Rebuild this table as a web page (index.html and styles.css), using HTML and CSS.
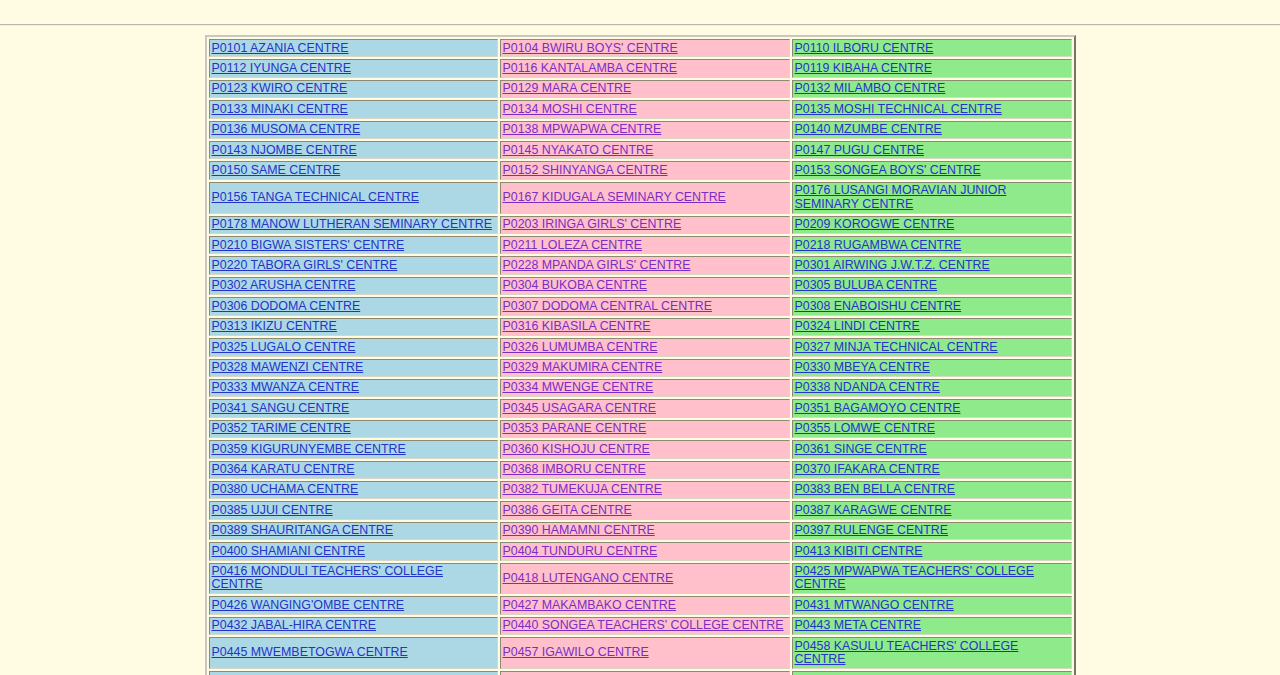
FILE: index.html
```html
<!DOCTYPE html>
<html>
<head>
<meta charset="utf-8">
<title>Centres</title>
<link rel="stylesheet" href="styles.css">
</head>
<body>
<hr class="rule">
<table class="centres">
<colgroup><col class="c1"><col class="c2"><col class="c3"></colgroup>
<tr><td class="blue"><a href="#">P0101 AZANIA CENTRE</a></td><td class="pink"><a href="#">P0104 BWIRU BOYS' CENTRE</a></td><td class="green"><a href="#">P0110 ILBORU CENTRE</a></td></tr>
<tr><td class="blue"><a href="#">P0112 IYUNGA CENTRE</a></td><td class="pink"><a href="#">P0116 KANTALAMBA CENTRE</a></td><td class="green"><a href="#">P0119 KIBAHA CENTRE</a></td></tr>
<tr><td class="blue"><a href="#">P0123 KWIRO CENTRE</a></td><td class="pink"><a href="#">P0129 MARA CENTRE</a></td><td class="green"><a href="#">P0132 MILAMBO CENTRE</a></td></tr>
<tr><td class="blue"><a href="#">P0133 MINAKI CENTRE</a></td><td class="pink"><a href="#">P0134 MOSHI CENTRE</a></td><td class="green"><a href="#">P0135 MOSHI TECHNICAL CENTRE</a></td></tr>
<tr><td class="blue"><a href="#">P0136 MUSOMA CENTRE</a></td><td class="pink"><a href="#">P0138 MPWAPWA CENTRE</a></td><td class="green"><a href="#">P0140 MZUMBE CENTRE</a></td></tr>
<tr><td class="blue"><a href="#">P0143 NJOMBE CENTRE</a></td><td class="pink"><a href="#">P0145 NYAKATO CENTRE</a></td><td class="green"><a href="#">P0147 PUGU CENTRE</a></td></tr>
<tr><td class="blue"><a href="#">P0150 SAME CENTRE</a></td><td class="pink"><a href="#">P0152 SHINYANGA CENTRE</a></td><td class="green"><a href="#">P0153 SONGEA BOYS' CENTRE</a></td></tr>
<tr><td class="blue"><a href="#">P0156 TANGA TECHNICAL CENTRE</a></td><td class="pink"><a href="#">P0167 KIDUGALA SEMINARY CENTRE</a></td><td class="green"><a href="#">P0176 LUSANGI MORAVIAN JUNIOR SEMINARY CENTRE</a></td></tr>
<tr><td class="blue"><a href="#">P0178 MANOW LUTHERAN SEMINARY CENTRE</a></td><td class="pink"><a href="#">P0203 IRINGA GIRLS' CENTRE</a></td><td class="green"><a href="#">P0209 KOROGWE CENTRE</a></td></tr>
<tr><td class="blue"><a href="#">P0210 BIGWA SISTERS' CENTRE</a></td><td class="pink"><a href="#">P0211 LOLEZA CENTRE</a></td><td class="green"><a href="#">P0218 RUGAMBWA CENTRE</a></td></tr>
<tr><td class="blue"><a href="#">P0220 TABORA GIRLS' CENTRE</a></td><td class="pink"><a href="#">P0228 MPANDA GIRLS' CENTRE</a></td><td class="green"><a href="#">P0301 AIRWING J.W.T.Z. CENTRE</a></td></tr>
<tr><td class="blue"><a href="#">P0302 ARUSHA CENTRE</a></td><td class="pink"><a href="#">P0304 BUKOBA CENTRE</a></td><td class="green"><a href="#">P0305 BULUBA CENTRE</a></td></tr>
<tr><td class="blue"><a href="#">P0306 DODOMA CENTRE</a></td><td class="pink"><a href="#">P0307 DODOMA CENTRAL CENTRE</a></td><td class="green"><a href="#">P0308 ENABOISHU CENTRE</a></td></tr>
<tr><td class="blue"><a href="#">P0313 IKIZU CENTRE</a></td><td class="pink"><a href="#">P0316 KIBASILA CENTRE</a></td><td class="green"><a href="#">P0324 LINDI CENTRE</a></td></tr>
<tr><td class="blue"><a href="#">P0325 LUGALO CENTRE</a></td><td class="pink"><a href="#">P0326 LUMUMBA CENTRE</a></td><td class="green"><a href="#">P0327 MINJA TECHNICAL CENTRE</a></td></tr>
<tr><td class="blue"><a href="#">P0328 MAWENZI CENTRE</a></td><td class="pink"><a href="#">P0329 MAKUMIRA CENTRE</a></td><td class="green"><a href="#">P0330 MBEYA CENTRE</a></td></tr>
<tr><td class="blue"><a href="#">P0333 MWANZA CENTRE</a></td><td class="pink"><a href="#">P0334 MWENGE CENTRE</a></td><td class="green"><a href="#">P0338 NDANDA CENTRE</a></td></tr>
<tr><td class="blue"><a href="#">P0341 SANGU CENTRE</a></td><td class="pink"><a href="#">P0345 USAGARA CENTRE</a></td><td class="green"><a href="#">P0351 BAGAMOYO CENTRE</a></td></tr>
<tr><td class="blue"><a href="#">P0352 TARIME CENTRE</a></td><td class="pink"><a href="#">P0353 PARANE CENTRE</a></td><td class="green"><a href="#">P0355 LOMWE CENTRE</a></td></tr>
<tr><td class="blue"><a href="#">P0359 KIGURUNYEMBE CENTRE</a></td><td class="pink"><a href="#">P0360 KISHOJU CENTRE</a></td><td class="green"><a href="#">P0361 SINGE CENTRE</a></td></tr>
<tr><td class="blue"><a href="#">P0364 KARATU CENTRE</a></td><td class="pink"><a href="#">P0368 IMBORU CENTRE</a></td><td class="green"><a href="#">P0370 IFAKARA CENTRE</a></td></tr>
<tr><td class="blue"><a href="#">P0380 UCHAMA CENTRE</a></td><td class="pink"><a href="#">P0382 TUMEKUJA CENTRE</a></td><td class="green"><a href="#">P0383 BEN BELLA CENTRE</a></td></tr>
<tr><td class="blue"><a href="#">P0385 UJUI CENTRE</a></td><td class="pink"><a href="#">P0386 GEITA CENTRE</a></td><td class="green"><a href="#">P0387 KARAGWE CENTRE</a></td></tr>
<tr><td class="blue"><a href="#">P0389 SHAURITANGA CENTRE</a></td><td class="pink"><a href="#">P0390 HAMAMNI CENTRE</a></td><td class="green"><a href="#">P0397 RULENGE CENTRE</a></td></tr>
<tr><td class="blue"><a href="#">P0400 SHAMIANI CENTRE</a></td><td class="pink"><a href="#">P0404 TUNDURU CENTRE</a></td><td class="green"><a href="#">P0413 KIBITI CENTRE</a></td></tr>
<tr><td class="blue"><a href="#">P0416 MONDULI TEACHERS' COLLEGE CENTRE</a></td><td class="pink"><a href="#">P0418 LUTENGANO CENTRE</a></td><td class="green"><a href="#">P0425 MPWAPWA TEACHERS' COLLEGE CENTRE</a></td></tr>
<tr><td class="blue"><a href="#">P0426 WANGING'OMBE CENTRE</a></td><td class="pink"><a href="#">P0427 MAKAMBAKO CENTRE</a></td><td class="green"><a href="#">P0431 MTWANGO CENTRE</a></td></tr>
<tr><td class="blue"><a href="#">P0432 JABAL-HIRA CENTRE</a></td><td class="pink"><a href="#">P0440 SONGEA TEACHERS' COLLEGE CENTRE</a></td><td class="green"><a href="#">P0443 META CENTRE</a></td></tr>
<tr><td class="blue"><a href="#">P0445 MWEMBETOGWA CENTRE</a></td><td class="pink"><a href="#">P0457 IGAWILO CENTRE</a></td><td class="green"><a href="#">P0458 KASULU TEACHERS' COLLEGE CENTRE</a></td></tr>
<tr><td class="blue"><a href="#">P0459 KIBOHEHE SECONDARY CENTRE</a></td><td class="pink"><a href="#">P0460 KIBONDO CENTRE</a></td><td class="green"><a href="#">P0461 KIBURUBUTU CENTRE</a></td></tr>
</table>
</body>
</html>
```

FILE: styles.css
```css
html, body {
  margin: 0;
  padding: 0;
  background: #fffce3;
}

body {
  font-family: "Liberation Sans", Arial, sans-serif;
  font-size: 12.4px;
  line-height: 13.4px;
}

.rule {
  margin: 24px 0 9px;
  height: 0;
  border: 0;
  border-top: 1px solid #b9b8ae;
  border-bottom: 1px solid #efeee0;
}

.centres {
  margin: 0 auto;
  border: 2px outset #c8c8c0;
  border-spacing: 2px;
  table-layout: fixed;
  width: 871px;
}

.c1 { width: 289px; }
.c2 { width: 290px; }
.c3 { width: 280px; }

.centres td {
  border: 1px solid;
  border-color: #8c8a72 #d8d6c6 #d8d6c6 #8c8a72;
  padding: 1.5px 0 1.5px 2px;
  vertical-align: middle;
}

.blue { background: #acd8e6; }
.pink { background: #ffc0cb; }
.green { background: #8fea8c; }

.centres a {
  text-decoration: underline;
}

.blue a, .green a { color: #2433c8; }
.pink a { color: #7a2ec6; }
```
